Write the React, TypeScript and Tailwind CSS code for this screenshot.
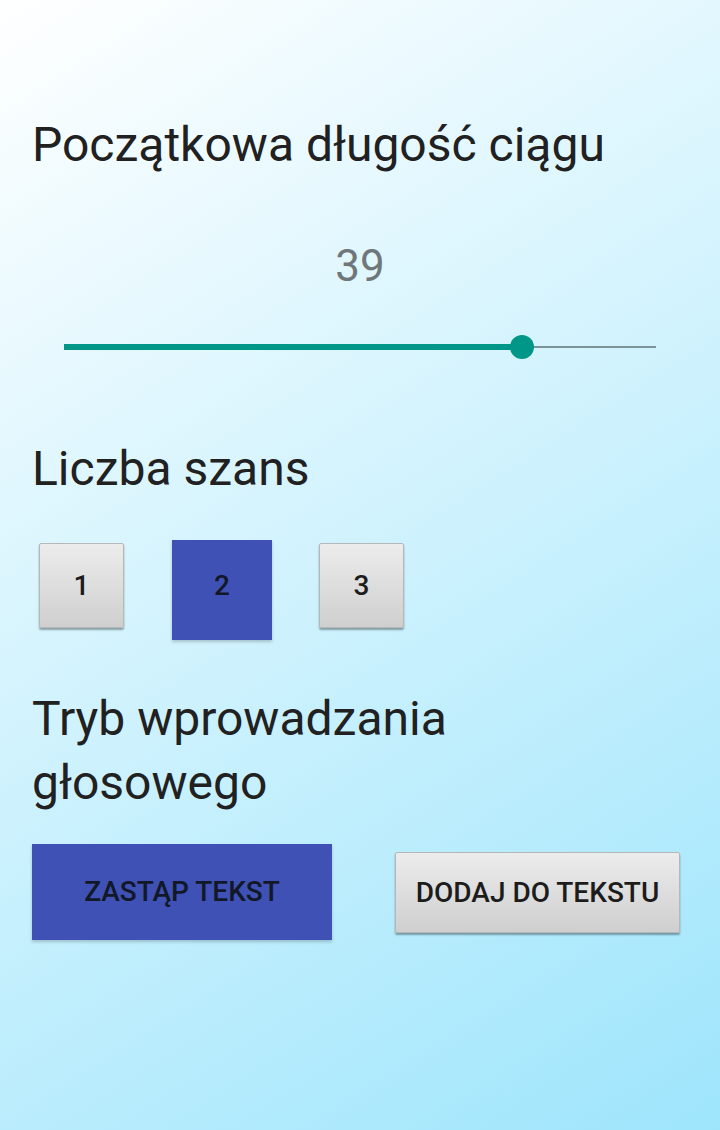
import React from "react";

function GrayBox({ label }: { label: string }) {
  return (
    <div className="w-[100px] h-[100px]">
      <div className="ml-[7px] mt-[3px] w-[85px] h-[85px] rounded-[2px] border border-[#b5b8b9] bg-[linear-gradient(to_bottom,#ececec,#cfcfcf)] shadow-[0_2px_2px_rgba(0,0,0,0.35)] flex items-center justify-center text-[28px] font-medium text-[#1c1c1c]">
        {label}
      </div>
    </div>
  );
}

export default function App() {
  return (
    <div className="w-[720px] min-h-[1130px] bg-[linear-gradient(147.5deg,#ffffff,#9ee5fc)] px-8 pt-[117px] font-['Roboto',sans-serif] text-[#212121]">
      <h1 className="text-[48px] leading-[56px] font-normal">Początkowa długość ciągu</h1>

      <div className="mt-[67px] text-center text-[44px] leading-[52px] text-[#6f777a]">39</div>

      <div className="mt-[43px] px-8">
        <div className="relative h-6 flex items-center">
          <div className="w-[458px] h-[6px] bg-[#009688]" />
          <div className="flex-1 h-[2px] bg-[#7a9499]" />
          <div className="absolute left-[446px] top-0 w-6 h-6 rounded-full bg-[#009688]" />
        </div>
      </div>

      <h2 className="mt-[82px] text-[48px] leading-[56px] font-normal">Liczba szans</h2>

      <div className="mt-[43px] flex gap-10">
        <GrayBox label="1" />
        <div className="w-[100px] h-[100px] bg-[#3f51b5] shadow-[0_2px_3px_rgba(0,0,0,0.2)] flex items-center justify-center pb-2 text-[28px] font-medium text-[#111827]">
          2
        </div>
        <GrayBox label="3" />
      </div>

      <h2 className="mt-[47px] text-[48px] leading-[64px] font-normal">
        Tryb wprowadzania
        <br />
        głosowego
      </h2>

      <div className="mt-[29px] flex items-start">
        <div className="w-[300px] h-[96px] bg-[#3f51b5] shadow-[0_2px_3px_rgba(0,0,0,0.2)] flex items-center justify-center text-[28px] font-medium uppercase text-[#111827]">
          Zastąp tekst
        </div>
        <div className="ml-[63px] mt-[8px] w-[285px] h-[81px] rounded-[2px] border border-[#b5b8b9] bg-[linear-gradient(to_bottom,#ececec,#cfcfcf)] shadow-[0_2px_2px_rgba(0,0,0,0.35)] flex items-center justify-center text-[28px] font-medium uppercase text-[#1c1c1c]">
          Dodaj do tekstu
        </div>
      </div>
    </div>
  );
}
